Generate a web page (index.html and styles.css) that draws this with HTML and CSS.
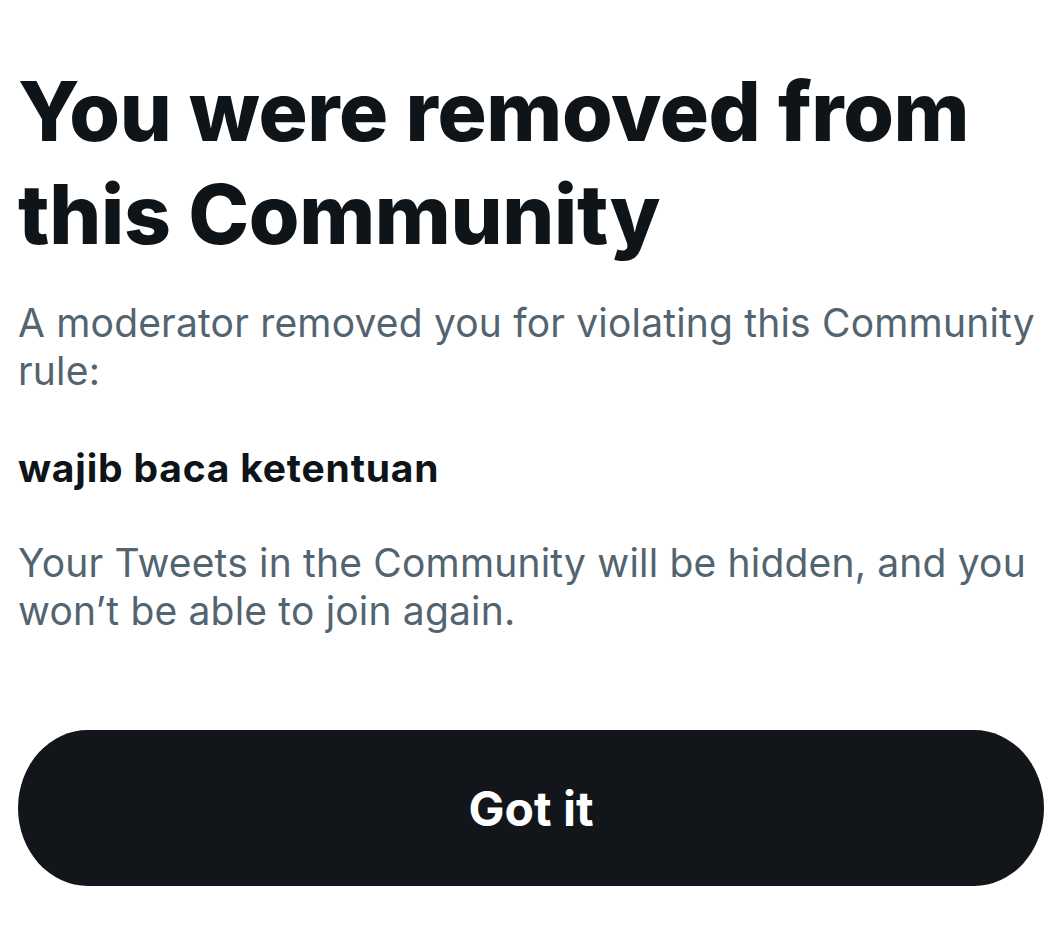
FILE: index.html
```html
<!DOCTYPE html>
<html lang="en">
<head>
<meta charset="utf-8">
<title>Removed from Community</title>
<link rel="stylesheet" href="styles.css">
</head>
<body>
<main class="sheet">
  <h1 class="title">You were removed from<br>this Community</h1>
  <p class="text">A moderator removed you for violating this Community<br>rule:</p>
  <p class="rule">wajib baca ketentuan</p>
  <p class="text text-last">Your Tweets in the Community will be hidden, and you<br>won’t be able to join again.</p>
  <button class="btn" type="button">Got it</button>
</main>
</body>
</html>
```
FILE: styles.css
```css
html, body {
  margin: 0;
  padding: 0;
  background: #ffffff;
}
body {
  font-family: Inter, "Noto Sans", "Liberation Sans", sans-serif;
  color: #0f1419;
}
.sheet {
  display: flex;
  flex-direction: column;
  align-items: stretch;
  padding: 60px 15px 0 18px;
}
.title {
  margin: 0;
  font-size: 82px;
  line-height: 103px;
  font-weight: 800;
  letter-spacing: -0.35px;
  white-space: nowrap;
}
.text {
  margin: 33px 0 0;
  font-size: 39px;
  line-height: 48px;
  font-weight: 400;
  letter-spacing: 0.18px;
  color: #536471;
  white-space: nowrap;
}
.rule {
  margin: 49px 0 0;
  font-size: 39px;
  line-height: 48px;
  font-weight: 700;
  letter-spacing: 0.8px;
  color: #0f1419;
}
.text-last {
  margin-top: 47px;
}
.btn {
  margin-top: 95px;
  height: 156px;
  border: none;
  border-radius: 70px / 78px;
  background: #12151a;
  color: #ffffff;
  font-family: Inter, "Noto Sans", "Liberation Sans", sans-serif;
  font-size: 48px;
  font-weight: 700;
  cursor: pointer;
}
```
